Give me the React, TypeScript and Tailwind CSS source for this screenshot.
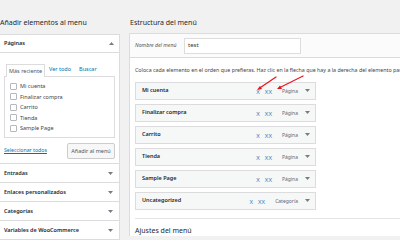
import React from "react";

function Tri({ up = false }: { up?: boolean }) {
  return (
    <svg width="5" height="3" viewBox="0 0 5 3" className="shrink-0">
      {up ? <polygon points="0,3 5,3 2.5,0" fill="#787c82" /> : <polygon points="0,0 5,0 2.5,3" fill="#787c82" />}
    </svg>
  );
}

const pages = ["Mi cuenta", "Finalizar compra", "Carrito", "Tienda", "Sample Page"];
const items = [
  { t: "Mi cuenta", k: "Página" },
  { t: "Finalizar compra", k: "Página" },
  { t: "Carrito", k: "Página" },
  { t: "Tienda", k: "Página" },
  { t: "Sample Page", k: "Página" },
  { t: "Uncategorized", k: "Categoría" },
];
const sections = ["Entradas", "Enlaces personalizados", "Categorías", "Variables de WooCommerce"];

export default function App() {
  return (
    <div className="relative w-[400px] h-[240px] overflow-hidden bg-[#f1f1f1] text-[#23282d] font-['Noto_Sans',sans-serif]">
      <div className="flex gap-[9px] pt-[18px]">
        {/* Left column */}
        <div className="w-[120px] shrink-0">
          <h2 className="text-[7px] leading-[10px] h-[10px] whitespace-nowrap text-[#23282d]">Añadir elementos al menu</h2>
          <div className="mt-[6px] bg-white border border-l-0 border-[#dcdcde]">
            <div className="h-[18px] border-b border-[#dcdcde] flex items-center justify-between pl-[4px] pr-[5px]">
              <span className="text-[5.5px] font-semibold">Páginas</span>
              <Tri up />
            </div>
            <div className="px-[4px] pt-[10px] pb-[4px]">
              <div className="flex items-end h-[13px] text-[5.5px]">
                <div className="ml-[2px] h-[13px] px-[2px] flex items-center border border-b-0 border-[#dcdcde] bg-white text-[#555] relative top-px">Más reciente</div>
                <span className="ml-[4px] h-[13px] flex items-center text-[#0073aa]">Ver todo</span>
                <span className="ml-[8px] h-[13px] flex items-center text-[#0073aa]">Buscar</span>
              </div>
              <div className="h-[62px] border border-[#dcdcde] pt-[4px] px-[5px]">
                {pages.map((p) => (
                  <div key={p} className="h-[10.5px] flex items-center gap-[3px]">
                    <div className="w-[7px] h-[7px] border border-[#b4b9be] bg-white rounded-[1px]" />
                    <span className="text-[5.5px] text-[#444]">{p}</span>
                  </div>
                ))}
              </div>
              <div className="mt-[5px] flex items-center justify-between">
                <span className="text-[5.2px] text-[#0073aa] underline">Seleccionar todos</span>
                <div className="h-[16px] w-[48px] flex items-center justify-center border border-[#cccccc] bg-[#f7f7f7] rounded-[2px] text-[5.5px] text-[#555]">Añadir al menú</div>
              </div>
            </div>
            {sections.map((s) => (
              <div key={s} className="h-[19px] border-t border-[#dcdcde] flex items-center justify-between pl-[4px] pr-[6px]">
                <span className="text-[5.5px] font-semibold">{s}</span>
                <Tri />
              </div>
            ))}
          </div>
        </div>

        {/* Right column */}
        <div className="w-[300px] shrink-0">
          <h2 className="ml-[1px] text-[7px] leading-[10px] h-[10px] whitespace-nowrap text-[#23282d]">Estructura del menú</h2>
          <div className="mt-[5px] bg-white border-l border-t border-[#dcdcde]">
            <div className="h-[24px] bg-[#fbfbfb] border-b border-[#dcdcde] flex items-center px-[5px]">
              <span className="w-[49px] text-[5.2px] italic text-[#555]">Nombre del menú</span>
              <div className="w-[117px] h-[16px] border border-[#dddddd] bg-white flex items-center pl-[3px] text-[6px] text-[#32373c]">test</div>
            </div>
            <div className="px-[5px] pt-[7px]">
              <p className="text-[5.3px] leading-[10px] whitespace-nowrap text-[#444]">
                Coloca cada elemento en el orden que prefieras. Haz clic en la flecha que hay a la derecha del elemento para mostrar más opciones de configuración.
              </p>
              <div className="mt-[7px]">
                {items.map((it) => (
                  <div key={it.t} className="h-[18px] mb-[4px] w-[181px] bg-[#f6f7f7] border border-[#dcdcde] flex items-center pl-[6px] pr-[5px]">
                    <span className="flex-1 text-[5.5px] font-semibold text-[#23282d] -mt-[1px]">{it.t}</span>
                    <div className="flex items-center pt-[2px]">
                      <span className="text-[6px] text-[#2f7fc1]">X</span>
                      <span className="ml-[5px] text-[6px] text-[#2f7fc1]">XX</span>
                      <span className="ml-[10px] text-[5px] text-[#646970]">{it.k}</span>
                    </div>
                    <div className="ml-[7px] -mt-[1px]"><Tri /></div>
                  </div>
                ))}
              </div>
              <div className="mt-[8px] border-t border-[#e5e5e5] pt-[7px]">
                <h3 className="text-[7px] leading-[10px] text-[#23282d]">Ajustes del menú</h3>
              </div>
            </div>
          </div>
        </div>
      </div>

      {/* Red annotation arrows */}
      <svg className="absolute left-0 top-0 pointer-events-none" width="400" height="240" viewBox="0 0 400 240">
        <g stroke="#e8141a" strokeWidth="1.2" fill="#e8141a" strokeLinecap="round">
          <line x1="276" y1="77" x2="259" y2="88.5" />
          <polygon points="257,90 260,86 262,89" stroke="none" />
          <line x1="303" y1="76" x2="280" y2="87.5" />
          <polygon points="277,89 280,85.5 282,89" stroke="none" />
        </g>
      </svg>
    </div>
  );
}
